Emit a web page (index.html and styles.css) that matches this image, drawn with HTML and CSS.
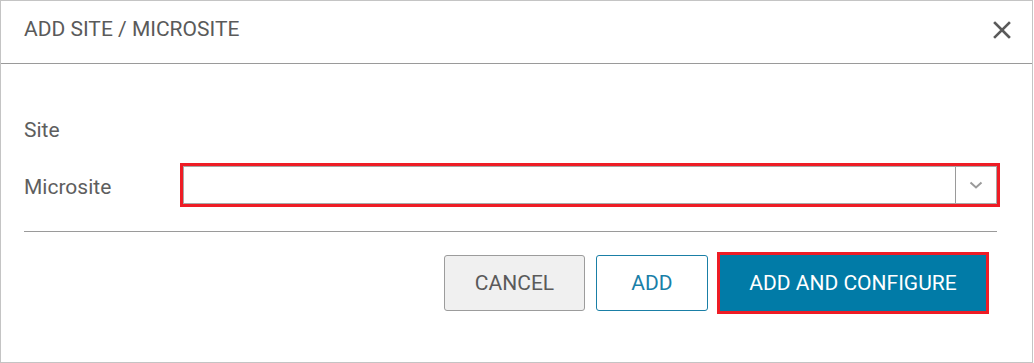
FILE: index.html
```html
<!DOCTYPE html>
<html>
<head>
  <title>Add Site / Microsite</title>
  <link rel="stylesheet" href="styles.css">
</head>
<body>
  <div class="dialog">
    <div class="dialog-header">
      <h2 class="dialog-title">ADD SITE / MICROSITE</h2>
      <svg class="close-icon" width="18" height="18" viewBox="0 0 18 18">
        <path d="M2 2 L16 16 M16 2 L2 16" stroke="#5a5a5a" stroke-width="2.6" stroke-linecap="square"/>
      </svg>
    </div>

    <div class="dialog-body">
      <div class="field-label site-label">Site</div>

      <div class="form-row">
        <div class="field-label row-label">Microsite</div>
        <div class="select-box highlight">
          <div class="select-value"></div>
          <div class="select-arrow">
            <svg width="14" height="8" viewBox="0 0 14 8">
              <path d="M1.5 1.5 L7 6.5 L12.5 1.5" fill="none" stroke="#9a9a9a" stroke-width="2"/>
            </svg>
          </div>
        </div>
      </div>

      <div class="divider"></div>

      <div class="button-row">
        <button class="btn btn-cancel">CANCEL</button>
        <button class="btn btn-add">ADD</button>
        <button class="btn btn-primary highlight">ADD AND CONFIGURE</button>
      </div>
    </div>
  </div>
</body>
</html>
```

FILE: styles.css
```css
body {
  margin: 0;
  background-color: #fff;
  font-family: Roboto, "Liberation Sans", Arial, sans-serif;
  color: #5a5a5a;
}

.dialog {
  width: 1033px;
  height: 363px;
  box-sizing: border-box;
  border: 1px solid #c4c4c4;
  background-color: #fff;
}

.dialog-header {
  display: flex;
  justify-content: space-between;
  align-items: flex-start;
  height: 63px;
  box-sizing: border-box;
  padding: 16px 21px 0 23px;
  border-bottom: 1px solid #9a9a9a;
}

.dialog-title {
  margin: 0;
  font-size: 21px;
  font-weight: normal;
  line-height: 24px;
  color: #5a5a5a;
}

.close-icon {
  margin-top: 4px;
}

.dialog-body {
  padding: 54px 35px 0 23px;
}

.field-label {
  font-size: 21px;
  line-height: 24px;
  color: #5e5e5e;
}

.form-row {
  display: flex;
  align-items: center;
  margin-top: 24px;
}

.row-label {
  width: 159px;
  padding-top: 4px;
}

.select-box {
  flex: 1;
  display: flex;
  height: 38px;
  box-sizing: border-box;
  border: 1px solid #a8a8a8;
  background-color: #fff;
}

.select-value {
  flex: 1;
}

.select-arrow {
  width: 40px;
  display: flex;
  align-items: center;
  justify-content: center;
  border-left: 1px solid #9a9a9a;
}

.highlight {
  box-shadow: 0 0 0 3px #ee1c25;
}

.divider {
  height: 1px;
  margin-top: 27px;
  background-color: #9a9a9a;
}

.button-row {
  display: flex;
  justify-content: flex-end;
  gap: 11px;
  margin-top: 23px;
  padding-right: 11px;
}

.btn {
  height: 56px;
  box-sizing: border-box;
  font-family: Roboto, "Liberation Sans", Arial, sans-serif;
  font-size: 21px;
  border-radius: 3px;
  cursor: pointer;
}

.btn-cancel {
  width: 141px;
  background-color: #f0f0f0;
  border: 1px solid #9c9c9c;
  color: #5a5a5a;
}

.btn-add {
  width: 112px;
  background-color: #fff;
  border: 1px solid #1a7fa6;
  color: #1a80a8;
}

.btn-primary {
  width: 266px;
  margin-left: 1px;
  background-color: #017ba7;
  border: 1px solid #017ba7;
  border-radius: 0;
  color: #fff;
}
```
